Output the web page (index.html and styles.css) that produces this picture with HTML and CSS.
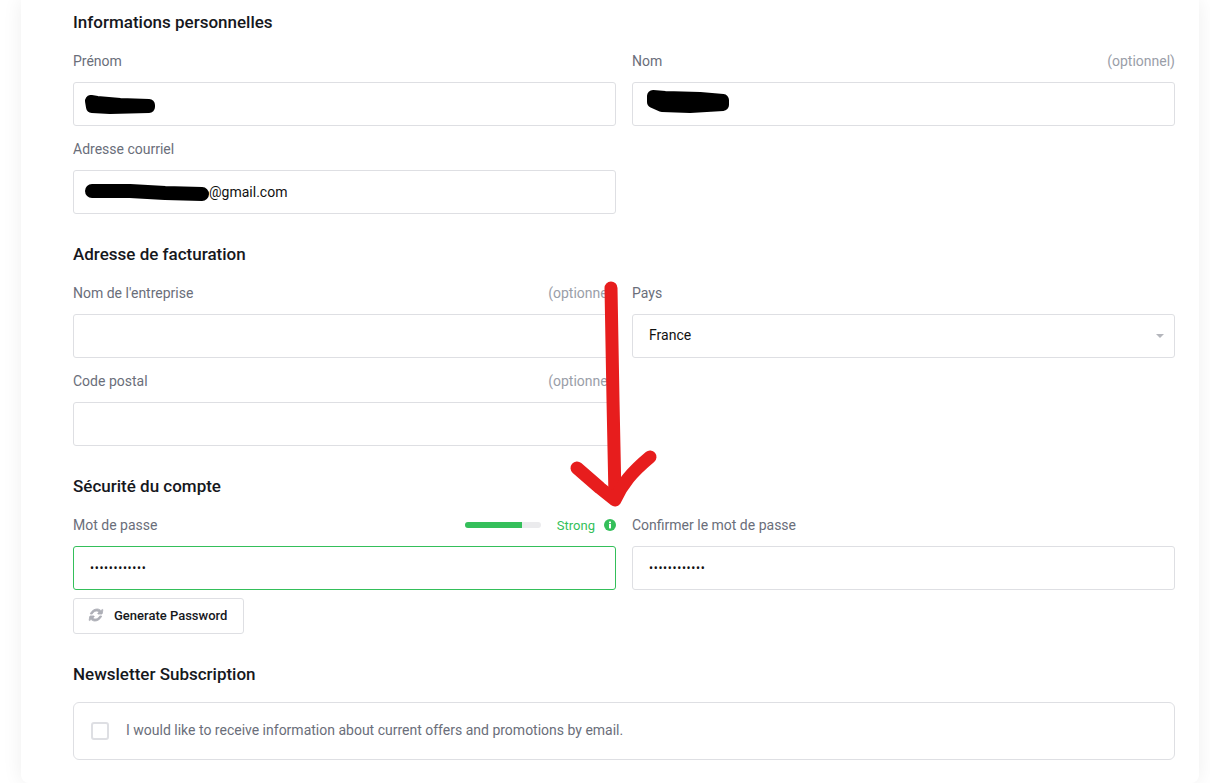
FILE: index.html
```html
<!DOCTYPE html>
<html lang="fr">
<head>
  <meta charset="UTF-8">
  <meta name="viewport" content="width=device-width, initial-scale=1.0">
  <title>Informations du compte</title>
  <link rel="stylesheet" href="styles.css">
</head>
<body>
  <div class="card">
    <form class="form">
      <h2>Informations personnelles</h2>
      <div class="grid">
        <div class="field">
          <div class="label-row"><label>Prénom</label></div>
          <input class="input" type="text">
        </div>
        <div class="field">
          <div class="label-row"><label>Nom</label><span class="optional">(optionnel)</span></div>
          <input class="input" type="text">
        </div>
        <div class="field">
          <div class="label-row"><label>Adresse courriel</label></div>
          <div class="input email"><span class="email-hidden"></span>@gmail.com</div>
        </div>
      </div>

      <h2>Adresse de facturation</h2>
      <div class="grid">
        <div class="field">
          <div class="label-row"><label>Nom de l'entreprise</label><span class="optional">(optionnel)</span></div>
          <input class="input" type="text">
        </div>
        <div class="field">
          <div class="label-row"><label>Pays</label></div>
          <div class="select-wrap">
            <div class="input select">France</div>
          </div>
        </div>
        <div class="field">
          <div class="label-row"><label>Code postal</label><span class="optional">(optionnel)</span></div>
          <input class="input" type="text">
        </div>
      </div>

      <h2>Sécurité du compte</h2>
      <div class="grid">
        <div class="field">
          <div class="label-row">
            <label>Mot de passe</label>
            <div class="strength">
              <div class="meter"><div class="meter-fill"></div></div>
              <span class="strength-text">Strong</span>
              <svg class="info" viewBox="0 0 12 12"><circle cx="6" cy="6" r="6" fill="#34bf5a"/><rect x="5" y="5" width="2" height="4.4" fill="#fff"/><rect x="5" y="2.6" width="2" height="1.6" fill="#fff"/></svg>
            </div>
          </div>
          <div class="input password valid">••••••••••••</div>
          <button class="btn" type="button">
            <svg class="sync" viewBox="0 0 1792 1792"><path d="M1639 1056q0 5-1 7-64 268-268 434.5t-478 166.5q-146 0-282.5-55t-243.5-157l-129 129q-19 19-45 19t-45-19-19-45v-448q0-26 19-45t45-19h448q26 0 45 19t19 45-19 45l-137 137q71 66 161 102t187 36q134 0 250-65t186-179q11-17 53-117 8-23 30-23h192q13 0 22.5 9.5t9.5 22.5zm25-800v448q0 26-19 45t-45 19h-448q-26 0-45-19t-19-45 19-45l138-138q-148-137-349-137-134 0-250 65t-186 179q-11 17-53 117-8 23-30 23h-199q-13 0-22.5-9.5t-9.5-22.5v-7q65-268 270-434.5t480-166.5q146 0 284 55.5t245 156.5l130-129q19-19 45-19t45 19 19 45z"/></svg>
            Generate Password
          </button>
        </div>
        <div class="field">
          <div class="label-row"><label>Confirmer le mot de passe</label></div>
          <div class="input password">••••••••••••</div>
        </div>
      </div>

      <h2 class="newsletter-title">Newsletter Subscription</h2>
      <label class="newsletter">
        <span class="checkbox"></span>
        I would like to receive information about current offers and promotions by email.
      </label>
    </form>
  </div>

  <!-- markup drawn over the screenshot -->
  <svg class="scribbles" viewBox="0 0 1210 783">
    <g fill="none" stroke="#000" stroke-linecap="round" stroke-linejoin="round">
      <path d="M91 101 L97 102 L120 104 L149 105 L149 107 L110 108 L92 107 Z" stroke-width="12" fill="#000"/>
      <path d="M653 96 L665 97 L700 98 L723 100 L723 105 L690 107 L662 106 L653 102 Z" stroke-width="12" fill="#000"/>
      <path d="M92 191 L130 191 L165 193 L202 194" stroke-width="14"/>
      <path d="M611 288 L613 400 L615 497" stroke="#e71d1d" stroke-width="13"/>
      <path d="M577 468 L600 488 L615 500 C622 484 632 472 650 457" stroke="#e71d1d" stroke-width="13"/>
    </g>
  </svg>
</body>
</html>
```

FILE: styles.css
```css
* { box-sizing: border-box; }
html, body { margin: 0; padding: 0; }
body {
  font-family: 'Roboto', sans-serif;
  font-size: 14px;
  color: #111;
  background: #fff;
  height: 783px;
  overflow: hidden;
  padding: 0 11px 0 21px;
  position: relative;
}
.card {
  background: #fff;
  height: 783px;
  border-radius: 0 0 8px 8px;
  box-shadow: 0 0 20px rgba(0, 0, 0, .07);
  padding: 12px 24px 0 52px;
}
h2 {
  font-size: 17px;
  font-weight: 500;
  line-height: 20px;
  margin: 0 0 18px;
  color: #16181d;
}
.grid {
  display: grid;
  grid-template-columns: 1fr 1fr;
  column-gap: 16px;
  margin-bottom: 18px;
}
.field { margin-bottom: 12px; min-width: 0; }
.label-row {
  display: flex;
  justify-content: space-between;
  align-items: center;
  height: 22px;
  margin-bottom: 10px;
}
label { color: #6a6e7a; }
.optional { color: #9a9ea8; }
.input {
  display: block;
  width: 100%;
  height: 44px;
  border: 1px solid #dedfe3;
  border-radius: 3px;
  background: #fff;
  padding: 0 16px;
  font: inherit;
  color: #111;
  line-height: 42px;
}
.email { white-space: nowrap; }
.email-hidden { display: inline-block; width: 119px; }
.select { line-height: 40px; }
.select-wrap { position: relative; }
.select-wrap::after {
  content: "";
  position: absolute;
  right: 11px;
  top: 20px;
  border: 4px solid transparent;
  border-top-color: #b4b6bc;
  border-bottom: 0;
}
.password { font-size: 12px; letter-spacing: .65px; }
.valid { border-color: #34bf5a; }
.strength { display: flex; align-items: center; }
.meter {
  width: 76px;
  height: 6px;
  background: #ebebed;
  border-radius: 3px;
  overflow: hidden;
  margin-right: 16px;
}
.meter-fill { width: 75%; height: 100%; background: #34bf5a; }
.strength-text { color: #34bf5a; font-size: 13px; margin-right: 9px; }
.info { width: 12px; height: 12px; }
.btn {
  display: flex;
  align-items: center;
  height: 36px;
  margin-top: 8px;
  padding: 0 16px 2px 15px;
  border: 1px solid #dedfe3;
  border-radius: 3px;
  background: #fff;
  font: 500 13px 'Roboto', sans-serif;
  color: #16181d;
}
.sync {
  width: 14px;
  height: 14px;
  fill: #aeb0b7;
  stroke: #aeb0b7;
  stroke-width: 110;
  margin-right: 11px;
  transform: skewX(-10deg);
}
.newsletter-title { margin-bottom: 18px; }
.newsletter {
  display: flex;
  align-items: center;
  height: 58px;
  padding: 0 17px 2px;
  border: 1px solid #dedfe3;
  border-radius: 6px;
}
.checkbox {
  width: 18px;
  height: 18px;
  border: 2px solid #dedfe3;
  border-radius: 3px;
  margin-right: 17px;
  position: relative;
  top: 1px;
}
.scribbles {
  position: absolute;
  top: 0;
  left: 0;
  width: 1210px;
  height: 783px;
  pointer-events: none;
}
```
